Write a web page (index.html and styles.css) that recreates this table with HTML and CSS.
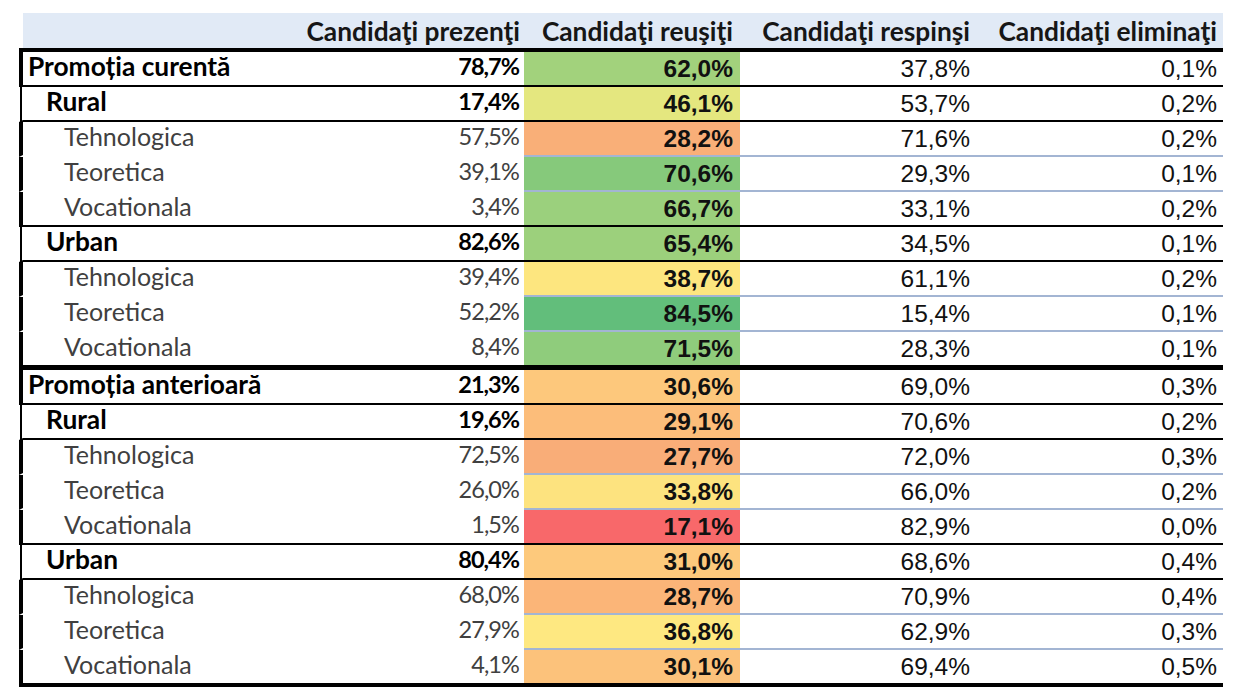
FILE: index.html
```html
<!DOCTYPE html>
<html lang="ro">
<head>
<meta charset="utf-8">
<title>Candidați</title>
<link rel="stylesheet" href="styles.css">
</head>
<body>
<div class="sheet">
<table class="grid">
<colgroup>
<col class="w1"><col class="w2"><col class="w3"><col class="w4"><col class="w5">
</colgroup>
<thead>
<tr>
<th class="h-label"></th>
<th class="c2">Candidaţi prezenţi</th>
<th class="c3">Candidaţi reuşiţi</th>
<th class="c4">Candidaţi respinşi</th>
<th class="c5">Candidaţi eliminaţi</th>
</tr>
</thead>
<tbody>
<tr class="grp"><td class="lbl">Promoția curentă</td><td class="c2 pz">78,7%</td><td class="c3 rs" style="background:#a2d27c">62,0%</td><td class="c4 rp">37,8%</td><td class="c5 rp">0,1%</td></tr>
<tr class="sub"><td class="lbl">Rural</td><td class="c2 pz">17,4%</td><td class="c3 rs" style="background:#e4e77f">46,1%</td><td class="c4 rp">53,7%</td><td class="c5 rp">0,2%</td></tr>
<tr class="leaf"><td class="lbl">Tehnologica</td><td class="c2 pz">57,5%</td><td class="c3 rs" style="background:#f9af78">28,2%</td><td class="c4 rp">71,6%</td><td class="c5 rp">0,2%</td></tr>
<tr class="leaf"><td class="lbl">Teoretica</td><td class="c2 pz">39,1%</td><td class="c3 rs" style="background:#86c97b">70,6%</td><td class="c4 rp">29,3%</td><td class="c5 rp">0,1%</td></tr>
<tr class="leaf end"><td class="lbl">Vocationala</td><td class="c2 pz">3,4%</td><td class="c3 rs" style="background:#9bd07d">66,7%</td><td class="c4 rp">33,1%</td><td class="c5 rp">0,2%</td></tr>
<tr class="sub"><td class="lbl">Urban</td><td class="c2 pz">82,6%</td><td class="c3 rs" style="background:#9cd07c">65,4%</td><td class="c4 rp">34,5%</td><td class="c5 rp">0,1%</td></tr>
<tr class="leaf"><td class="lbl">Tehnologica</td><td class="c2 pz">39,4%</td><td class="c3 rs" style="background:#fde67f">38,7%</td><td class="c4 rp">61,1%</td><td class="c5 rp">0,2%</td></tr>
<tr class="leaf"><td class="lbl">Teoretica</td><td class="c2 pz">52,2%</td><td class="c3 rs" style="background:#62be7b">84,5%</td><td class="c4 rp">15,4%</td><td class="c5 rp">0,1%</td></tr>
<tr class="leaf end end-promo"><td class="lbl">Vocationala</td><td class="c2 pz">8,4%</td><td class="c3 rs" style="background:#8fcc7c">71,5%</td><td class="c4 rp">28,3%</td><td class="c5 rp">0,1%</td></tr>
<tr class="grp"><td class="lbl">Promoția anterioară</td><td class="c2 pz">21,3%</td><td class="c3 rs" style="background:#fdc87c">30,6%</td><td class="c4 rp">69,0%</td><td class="c5 rp">0,3%</td></tr>
<tr class="sub"><td class="lbl">Rural</td><td class="c2 pz">19,6%</td><td class="c3 rs" style="background:#fcbd7a">29,1%</td><td class="c4 rp">70,6%</td><td class="c5 rp">0,2%</td></tr>
<tr class="leaf"><td class="lbl">Tehnologica</td><td class="c2 pz">72,5%</td><td class="c3 rs" style="background:#f9ad78">27,7%</td><td class="c4 rp">72,0%</td><td class="c5 rp">0,3%</td></tr>
<tr class="leaf"><td class="lbl">Teoretica</td><td class="c2 pz">26,0%</td><td class="c3 rs" style="background:#fde37f">33,8%</td><td class="c4 rp">66,0%</td><td class="c5 rp">0,2%</td></tr>
<tr class="leaf end"><td class="lbl">Vocationala</td><td class="c2 pz">1,5%</td><td class="c3 rs" style="background:#f8686a">17,1%</td><td class="c4 rp">82,9%</td><td class="c5 rp">0,0%</td></tr>
<tr class="sub"><td class="lbl">Urban</td><td class="c2 pz">80,4%</td><td class="c3 rs" style="background:#fdc97c">31,0%</td><td class="c4 rp">68,6%</td><td class="c5 rp">0,4%</td></tr>
<tr class="leaf"><td class="lbl">Tehnologica</td><td class="c2 pz">68,0%</td><td class="c3 rs" style="background:#fbb578">28,7%</td><td class="c4 rp">70,9%</td><td class="c5 rp">0,4%</td></tr>
<tr class="leaf"><td class="lbl">Teoretica</td><td class="c2 pz">27,9%</td><td class="c3 rs" style="background:#fee881">36,8%</td><td class="c4 rp">62,9%</td><td class="c5 rp">0,3%</td></tr>
<tr class="leaf end end-table"><td class="lbl">Vocationala</td><td class="c2 pz">4,1%</td><td class="c3 rs" style="background:#fcc27b">30,1%</td><td class="c4 rp">69,4%</td><td class="c5 rp">0,5%</td></tr>
</tbody>
</table>
</div>
</body>
</html>
```
FILE: styles.css
```css
html, body {
  margin: 0;
  background: #ffffff;
}

.sheet {
  padding: 13px 0 0 19px;
}

.grid {
  border-collapse: separate;
  border-spacing: 0;
  table-layout: fixed;
  width: 1204px;
}

.w1 { width: 281px; }
.w2 { width: 224px; }
.w3 { width: 216px; }
.w4 { width: 236px; }
.w5 { width: 247px; }

/* header */
.grid th {
  height: 32px;
  padding: 3px 0 0 0;
  line-height: 30px;
  background: #e1eaf6;
  font-family: Lato, "Liberation Sans", sans-serif;
  font-weight: 700;
  font-size: 26.3px;
  color: #161616;
  text-align: right;
  white-space: nowrap;
  vertical-align: top;
  border-bottom: 4px solid #000;
}

.grid th.h-label {
  background: linear-gradient(to right, #ffffff 4px, #e1eaf6 4px);
}

/* body cells */
.grid td {
  padding: 0;
  line-height: 33px;
  vertical-align: top;
  white-space: nowrap;
  border-bottom: 2px solid #000;
  text-align: right;
  color: #111;
}

.c2 { padding-right: 4px !important; }
.c3 { padding-right: 7px !important; }
.c4 { padding-right: 6px !important; }
.c5 { padding-right: 6px !important; }

/* label column */
.grid td.lbl {
  text-align: left;
  font-family: Lato, "Liberation Sans", sans-serif;
  font-size: 25px;
  line-height: 29px;
  padding-bottom: 4px;
  border-left: 4px solid #000;
  color: #000;
}

.grp td.lbl {
  font-weight: 700;
  font-size: 26.3px;
  padding-left: 5px;
}

.sub td.lbl {
  font-weight: 700;
  font-size: 26.3px;
  padding-left: 23px;
  border-left-color: transparent;
  background-image: linear-gradient(#000, #000);
  background-size: 2px 100%;
  background-position: 1px 0;
  background-repeat: no-repeat;
  background-origin: border-box;
}

.leaf td.lbl {
  font-weight: 400;
  padding-left: 41px;
  color: #404040;
}

/* prezenti column (same face as labels, condensed spacing) */
.grid td.pz {
  font-family: Lato, "Liberation Sans", sans-serif;
  font-size: 23.5px;
  line-height: 29px;
  padding-bottom: 4px;
  padding-right: 5px !important;
  letter-spacing: -1px;
  font-weight: 700;
  color: #000;
}

.leaf td.pz {
  font-weight: 400;
  letter-spacing: -0.9px;
  color: #404040;
}

/* reusiti column */
.grid td.rs {
  font-family: "Liberation Sans", Arial, sans-serif;
  font-size: 24.5px;
  font-weight: 700;
  color: #111;
}

/* respinsi / eliminati */
.grid td.rp {
  font-family: "Liberation Sans", Arial, sans-serif;
  font-size: 24.5px;
  font-weight: 400;
  color: #111;
}

/* row separators */
.leaf td.lbl,
.leaf td.pz {
  border-bottom-color: #ffffff;
}

.leaf td.rs,
.leaf td.rp {
  border-bottom-color: #a3b5d3;
}

.leaf.end td {
  border-bottom-color: #000 !important;
}

.leaf.end-promo td {
  border-bottom-width: 5px;
}

.leaf.end-table td {
  border-bottom-width: 4px;
}
```
